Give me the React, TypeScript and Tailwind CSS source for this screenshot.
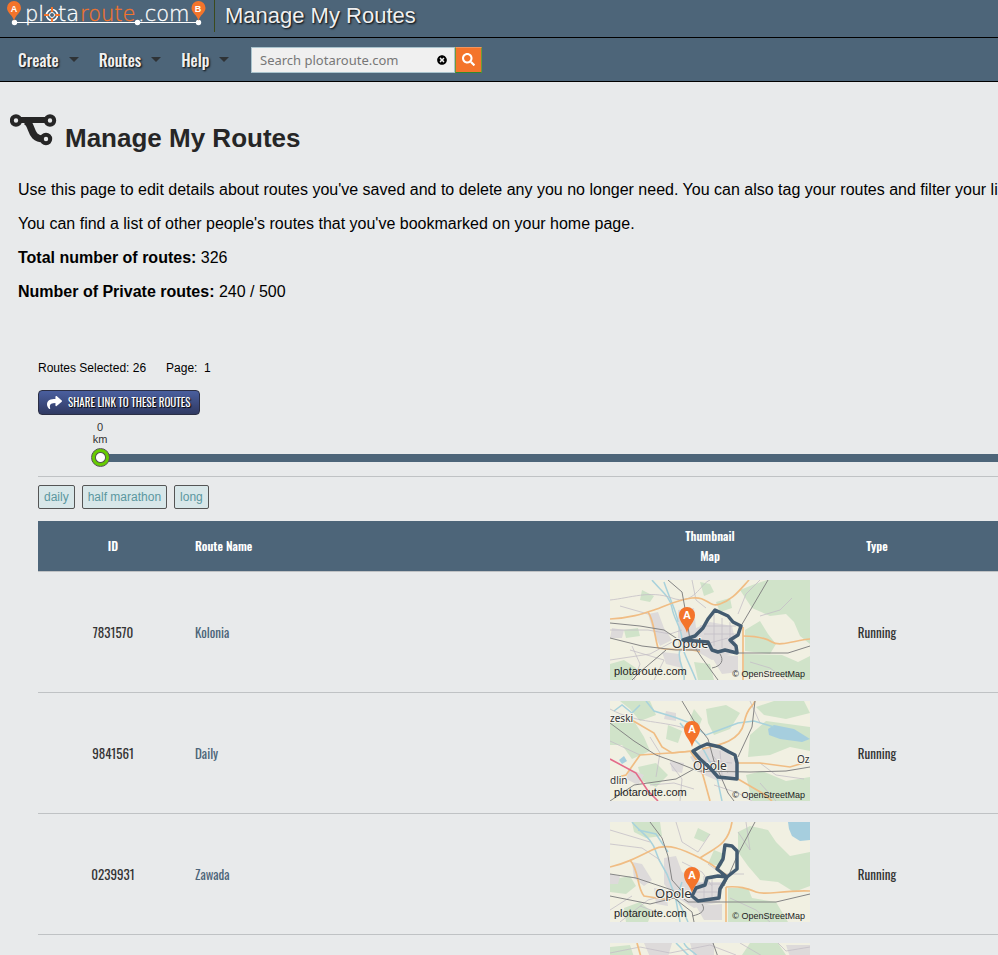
import type { ReactNode } from "react";
import { FaSearch, FaShare, FaTimesCircle } from "react-icons/fa";

const sans = "font-['Liberation_Sans',Arial,sans-serif]";
const narrow =
  "font-['Oswald','Roboto_Condensed','Liberation_Sans_Narrow','Liberation_Sans',sans-serif]";

function Pin({ x, y, label }: { x: number; y: number; label: string }) {
  return (
    <g transform={`translate(${x} ${y})`}>
      <path
        d="M0 0C-1.5-7-8-11-8-18A8 8 0 0 1 8-18C8-11 1.5-7 0 0Z"
        fill="#f4742b"
      />
      <text
        y="-14"
        textAnchor="middle"
        fill="#fff"
        fontSize="11"
        fontWeight="700"
        className={sans}
      >
        {label}
      </text>
    </g>
  );
}

function Logo() {
  return (
    <svg
      width="200"
      height="28"
      viewBox="0 0 200 28"
      className="block shrink-0 overflow-visible"
      role="img"
      aria-label="plotaroute.com"
    >
      <g
        className="font-['DejaVu_Sans_Light','DejaVu_Sans','Lato',sans-serif]"
        fontSize="21"
        fontWeight="200"
        fill="#fff"
      >
        <text x="17" y="21" stroke="#fff" strokeWidth="0.3">pl</text>
        <text x="50" y="21" stroke="#fff" strokeWidth="0.3">ta</text>
        <text x="72" y="21" fill="#f4742b" stroke="#f4742b" strokeWidth="0.3">
          route
        </text>
        <text x="130" y="21" stroke="#fff" strokeWidth="0.3">.com</text>
      </g>
      <g fill="none">
        <circle cx="44" cy="15" r="5.5" stroke="#fff" strokeWidth="1.6" />
        <circle cx="44" cy="15" r="2.5" stroke="#fff" strokeWidth="1" />
        <path
          d="M44 7v5M44 18v5M36 15h5M47 15h5"
          stroke="#f4742b"
          strokeWidth="2"
        />
      </g>
      <path d="M6 22.5H191" stroke="#fff" />
      <g fill="#fff">
        <circle cx="6.5" cy="22.5" r="2.7" />
        <circle cx="129.5" cy="22.5" r="2.7" />
        <circle cx="190.5" cy="22.5" r="2.7" />
      </g>
      <g fill="#f4742b">
        <path d="M6 21C5 15-1 13-1 8A7 7 0 0 1 13 8C13 13 7 15 6 21Z" />
        <path d="M190.5 21C189.5 15 183.5 13 183.5 8A7 7 0 0 1 197.5 8C197.5 13 191.5 15 190.5 21Z" />
      </g>
      <g
        className={sans}
        fill="#fff"
        fontSize="9"
        fontWeight="700"
        textAnchor="middle"
      >
        <text x="6" y="12">A</text>
        <text x="190" y="12">B</text>
      </g>
    </svg>
  );
}

function RoutesIcon() {
  return (
    <svg
      width="47"
      height="34"
      viewBox="0 0 47 34"
      className="block shrink-0"
      aria-hidden="true"
    >
      <g fill="none" stroke="#262626">
        <path d="M10 6H37" strokeWidth="6" />
        <path d="M15 7C24 9 18 26 35 25" strokeWidth="7" />
        <circle cx="6" cy="6.5" r="4.2" strokeWidth="4" fill="#e8eaeb" />
        <circle cx="40" cy="6.5" r="4.2" strokeWidth="4" fill="#e8eaeb" />
        <circle cx="36" cy="25" r="4.2" strokeWidth="4" fill="#e8eaeb" />
      </g>
    </svg>
  );
}

type Place = { x: number; y: number; size: number; name: string };

type MapData = {
  forest: string[];
  town: string[];
  water: string[];
  river: string[];
  lanes: string[];
  main: string[];
  rail: string[];
  motorway?: string;
  places: Place[];
  route?: string;
  pin?: [number, number];
};

const maps: Record<string, MapData> = {
  kolonia: {
    forest: [
      "M130 10L145 4L157 0H200V64L190 56L184 42L176 34L160 36L142 28Z",
      "M135 50L150 41L158 54L166 64L160 74L135 71Z",
      "M134 74L172 75L188 82L200 76V100H182L160 90L134 96Z",
      "M0 84L14 80L26 88L22 100H0Z",
      "M90 2L100 4L104 12L94 16ZM106 22L120 18L122 28L110 32Z",
      "M14 50L28 48L30 56L16 58ZM32 10L44 16L40 22L30 20Z",
      "M84 82L100 84L104 100H88Z",
    ],
    town: [
      "M68 30L84 28L86 48L100 42L122 46L128 72L102 80L84 70L68 66Z",
      "M38 34L48 32L54 48L62 60L50 66L44 54Z",
      "M52 72L70 74L72 88L56 84ZM2 48L14 50L12 58L0 58ZM100 74L128 76V92L112 94Z",
    ],
    water: [],
    river: [
      "M42 0C50 10 60 16 62 28S72 48 72 60S78 80 86 100",
      "M54 2C60 20 66 30 68 42M70 70C66 80 76 90 74 100",
    ],
    lanes: [
      "M0 20C20 18 40 10 62 18S90 4 100 0",
      "M0 50H38L60 54L72 50M10 26L38 34M20 70L54 80L44 100",
      "M90 46H126M94 54H128M104 34V66M112 38V68M120 42V64",
      "M82 0L86 20L96 28M0 80L40 74L66 60M96 64L118 58M140 82L160 88L176 100",
      "M150 36L170 30L182 18M22 66L30 84L24 100M150 0L136 14L128 34",
    ],
    main: [
      "M0 39C20 38 32 34 44 30S66 20 82 18S98 28 110 24S128 12 139 0",
      "M38 32C44 40 44 54 48 68",
      "M133 47V100",
      "M133 56C144 56 154 57 162 62S186 60 200 59",
      "M48 68C64 72 74 66 90 72",
    ],
    rail: [
      "M58 0L72 12L76 34L80 60L92 78L108 100",
      "M0 43L30 46L54 50L72 62",
      "M0 58L32 66L66 70L90 70",
      "M158 0L131 46",
      "M124 73H178L200 66",
      "M102 88C112 86 114 80 110 74M56 70L30 92L22 100",
    ],
    places: [{ x: 62, y: 68, size: 13, name: "Opole" }],
    route:
      "M73 60L85 56L93 48L98 39L105 30L118 36L123 42L131 46L128 55L120 60L126 66L127 73L115 70L108 72L102 70L98 62Z",
    pin: [77, 53],
  },
  daily: {
    forest: [
      "M0 20L10 14L24 20L34 36L40 50L22 58L12 44L0 44Z",
      "M10 0L40 0L46 14L30 20L20 8Z",
      "M96 8L116 4L130 12L120 28L104 34L98 22Z",
      "M140 34L156 20L200 26V50L180 46L160 54L138 56Z",
      "M146 6L164 0H194L200 12L176 18L154 14Z",
      "M136 74L152 70L176 80L200 76V100H142Z",
      "M28 66L46 62L58 74L46 86L32 80ZM84 8L92 18L88 28L80 18Z",
      "M58 24L72 30L68 42L56 38Z",
    ],
    town: [
      "M80 56L96 46L116 50L126 60V78L108 80L90 72Z",
      "M20 68L34 74L28 84L16 78ZM60 60L74 62L72 72L62 70Z",
      "M56 10L66 12L66 20L54 18Z",
    ],
    water: ["M158 28L164 24L184 28L200 38L192 41L170 38L159 34Z", "M9 59L14 55L17 60L12 63Z"],
    river: [
      "M36 0L44 10L64 16L80 22L96 34L112 28L128 22L144 20L164 26",
      "M70 22L80 34L92 46L106 72L112 100M4 10L12 4L22 12L30 4",
    ],
    lanes: [
      "M0 8C30 24 50 18 84 30M40 36L50 52L46 76M0 40L30 54",
      "M60 62L72 78L70 100M104 84L128 92L142 100M140 0L150 22",
      "M98 60L122 62M102 54L118 72M110 50L112 74",
      "M40 84L64 82L84 88M150 62L166 74L194 78M166 100L150 82",
    ],
    main: [
      "M20 18L44 32L52 46L62 52L82 50",
      "M0 78L16 74L30 54L60 52L84 50",
      "M80 50L90 64L94 78L100 100",
      "M92 48C110 44 130 40 134 22S142 8 145 0",
      "M128 62L150 62L180 66L200 60",
      "M128 78L152 92L162 100",
    ],
    rail: [
      "M72 0L84 20L98 38L104 60L118 92L124 100",
      "M0 22L24 40L46 54L68 62L88 70L140 71L176 70L200 66",
      "M145 0L142 26L128 56",
      "M84 68L66 78L24 84L0 100",
    ],
    motorway: "M0 58L26 72L38 90L48 100",
    places: [
      { x: 0, y: 21, size: 10, name: "zeski" },
      { x: 187, y: 62, size: 10, name: "Oz" },
      { x: 0, y: 83, size: 10, name: "dlin" },
      { x: 83, y: 69, size: 12, name: "Opole" },
    ],
    route:
      "M83 50L90 46L97 43L110 46L119 51L125 54L127 62V78L108 76L100 67L90 58Z",
    pin: [82, 46],
  },
  zawada: {
    forest: [
      "M128 10L140 4L158 8L166 20L180 34L200 30V64L184 70L168 60L150 58L138 44L128 30Z",
      "M104 28L114 32L112 44L98 42ZM118 66L138 66L142 76L166 80L178 100H118Z",
      "M0 58L20 54L26 64L16 72L0 70Z",
      "M22 0L50 0L52 14L36 16L24 10ZM88 6L100 12L94 20L84 16Z",
      "M14 86L30 80L42 90L38 100H16Z",
    ],
    town: [
      "M54 36L66 34L72 50L90 60L112 60L110 80L84 86L64 74L54 62Z",
      "M22 40L32 42L42 58L34 64L24 56ZM86 84L112 82V98H94Z",
      "M0 52L10 54L8 62L0 62ZM44 66L56 68L58 84L46 82Z",
    ],
    water: ["M178 0H200V18L190 19L182 14L179 7Z"],
    river: [
      "M22 0C30 10 42 16 46 30S56 46 60 60S70 80 78 100",
      "M28 8L46 12L58 30M72 60L66 78L70 100",
    ],
    lanes: [
      "M0 22L32 26L50 38M0 8L40 20M66 0L72 20L88 30L100 12",
      "M82 62H114M86 70H110M94 54V80M102 56V78",
      "M10 100L38 78L60 72M30 84L52 92M120 76L146 88L160 100",
      "M98 42L112 52L134 52M128 10L140 28L136 0",
      "M0 88L22 74M72 40L92 50L102 64",
    ],
    main: [
      "M0 45C14 42 26 36 42 28S74 28 90 36S106 46 118 54",
      "M20 38C30 50 26 64 34 74L60 78",
      "M90 36C104 26 118 24 122 0",
      "M116 65V100",
      "M116 65C130 64 136 66 146 70S170 68 200 69",
    ],
    rail: [
      "M40 0L52 16L58 34L62 58L78 76",
      "M0 52L26 56L62 68L78 80H166L200 72",
      "M145 0L128 32L114 64",
      "M0 74L40 82L64 76L82 90L84 100",
      "M82 94C92 92 96 88 92 82",
    ],
    places: [{ x: 45, y: 76, size: 13, name: "Opole" }],
    route:
      "M115 23L122 24L127 29V47L117 55L107 47L113 37ZM117 55L108 54L97 56L95 63L86 66L82 74L88 79L109 76L110 67Z",
    pin: [82, 71],
  },
  next: {
    forest: ["M140 0H168L176 12H132Z", "M0 4L20 2L24 14H0Z"],
    town: ["M34 0H62L58 14H40ZM80 0H104V14H84ZM176 2H200V14H180Z"],
    water: [],
    river: ["M74 0C76 6 84 8 88 14M66 0L80 14"],
    lanes: ["M0 10L30 4L60 10L100 2L126 12M130 0L154 14M168 0L176 8L200 4"],
    main: ["M27 0L31 14"],
    rail: ["M103 0L108 14"],
    places: [],
  },
};

function Thumb({ data, title }: { data: MapData; title: string }) {
  const draw = (paths: string[], stroke: string, width: number): ReactNode =>
    paths.map((d) => (
      <path key={d} d={d} fill="none" stroke={stroke} strokeWidth={width} />
    ));
  const fill = (paths: string[], colour: string): ReactNode =>
    paths.map((d) => <path key={d} d={d} fill={colour} />);
  return (
    <svg
      width="200"
      height="100"
      viewBox="0 0 200 100"
      className="mx-auto block overflow-hidden"
      role="img"
      aria-label={title}
    >
      <rect width="200" height="100" fill="#f1f0e2" />
      {fill(data.forest, "#d0e3c9")}
      {fill(data.town, "#dddada")}
      {fill(data.water, "#a6cede")}
      {draw(data.river, "#a8d2dc", 1.5)}
      {draw(data.lanes, "#c4bfc6", 0.8)}
      {draw(data.main, "#f0bd84", 1.7)}
      {draw(data.rail, "#858585", 1)}
      {data.motorway && draw([data.motorway], "#e46a89", 1.6)}
      {data.places.map((p) => (
        <text
          key={p.name}
          x={p.x}
          y={p.y}
          fontSize={p.size}
          fill="#333"
          stroke="#f6f5ee"
          strokeWidth="2"
          paintOrder="stroke"
          className="font-['Noto_Sans',sans-serif]"
        >
          {p.name}
        </text>
      ))}
      {data.route && (
        <path
          d={data.route}
          fill="none"
          stroke="#435b70"
          strokeWidth="3.5"
          strokeLinejoin="round"
        />
      )}
      {data.pin && <Pin x={data.pin[0]} y={data.pin[1]} label="A" />}
      {data.pin && (
        <g className={sans} fill="#222">
          <text x="4" y="95" fontSize="11">
            plotaroute.com
          </text>
          <text x="195" y="97" fontSize="9" textAnchor="end">
            © OpenStreetMap
          </text>
        </g>
      )}
    </svg>
  );
}

const routes = [
  { id: "7831570", name: "Kolonia", type: "Running", map: maps.kolonia },
  { id: "9841561", name: "Daily", type: "Running", map: maps.daily },
  { id: "0239931", name: "Zawada", type: "Running", map: maps.zawada },
  { id: "", name: "", type: "", map: maps.next },
];

const tags = ["daily", "half marathon", "long"];

function Header() {
  return (
    <header className="bg-[#4d6579]">
      <div className="flex h-[38px] items-start border-b border-black pl-2">
        <Logo />
        <div className="ml-1.5 h-8 border-l border-[#3b4a1c]" />
        <div className="ml-2.5 pt-0.5 text-[22px] leading-7 text-[#f0f0f0] [text-shadow:1px_1px_2px_#000]">
          Manage My Routes
        </div>
      </div>
      <div className="flex h-11 items-center border-b border-black pl-[18px]">
        <nav className={`flex w-[233px] gap-5 ${narrow}`}>
          {["Create", "Routes", "Help"].map((item) => (
            <button
              key={item}
              type="button"
              className="flex items-center gap-2.5 text-base leading-6 font-medium text-[#f0f0f0] [text-shadow:1px_1px_2px_#000]"
            >
              {item}
              <svg width="10" height="5" viewBox="0 0 10 5" aria-hidden="true">
                <path d="M0 0H10L5 5Z" fill="#2f3336" />
              </svg>
            </button>
          ))}
        </nav>
        <form className="flex h-[26px]" role="search">
          <div className="flex w-[204px] items-center border border-[#a9c3cd] bg-[#f0f0f0] pr-[7px] pl-2">
            <input
              aria-label="Search plotaroute.com"
              placeholder="Search plotaroute.com"
              className="min-w-0 flex-1 bg-transparent font-['Noto_Sans',sans-serif] text-[13px] leading-5 placeholder:text-[#777]"
            />
            <button type="button" aria-label="Clear search">
              <FaTimesCircle className="block size-2.5 text-black" />
            </button>
          </div>
          <button
            type="submit"
            aria-label="Search"
            className="flex w-[27px] items-center justify-center border border-t-[#f4955c] border-r-[#6f9a36] border-b-[#2f8a2f] border-l-[#6f9a36] bg-[#f4742b] text-white"
          >
            <FaSearch className="size-[13px]" />
          </button>
        </form>
      </div>
    </header>
  );
}

export default function App() {
  return (
    <div
      className={`h-screen overflow-hidden bg-[#e8eaeb] text-black ${sans}`}
    >
      <Header />
      <main>
        <div className="flex h-[90px] items-start pt-8 pl-2.5">
          <RoutesIcon />
          <h1 className="mt-1.5 ml-2 text-[26px] leading-9 font-bold text-[#262626]">
            Manage My Routes
          </h1>
        </div>
        <div className="space-y-2.5 pt-1.5 pl-[18px] text-base leading-6 whitespace-nowrap">
          <p>
            Use this page to edit details about routes you've saved and to
            delete any you no longer need. You can also tag your routes and
            filter your list
          </p>
          <p>
            You can find a list of other people's routes that you've bookmarked
            on your home page.
          </p>
          <p>
            <strong>Total number of routes:</strong> 326
          </p>
          <p>
            <strong>Number of Private routes:</strong> 240 / 500
          </p>
        </div>
        <section className="pt-14 pl-[38px]">
          <div className="flex gap-5 text-xs leading-4">
            <span>Routes Selected: 26</span>
            <span>Page: &nbsp;1</span>
          </div>
          <button
            type="button"
            className={`mt-3.5 flex h-[25px] items-center gap-1.5 rounded border border-[#2b2f45] bg-linear-to-b from-[#4a5f9f] to-[#303a63] px-2 text-[11px] text-white [text-shadow:1px_1px_1px_#000] ${narrow}`}
          >
            <FaShare className="size-[15px]" />
            SHARE LINK TO THESE ROUTES
          </button>
          <div className="h-[62px] border-b border-[#bfc2c4] pt-1.5 pl-[53px]">
            <label
              htmlFor="distance"
              className="block w-[18px] text-center text-[11px] leading-3 text-[#333]"
            >
              0 km
            </label>
            <input
              id="distance"
              type="range"
              min={0}
              max={100}
              defaultValue={0}
              className="mt-[3px] block h-5 w-full appearance-none bg-transparent [&::-webkit-slider-runnable-track]:h-2 [&::-webkit-slider-runnable-track]:bg-[linear-gradient(90deg,transparent_10px,#4d6579_10px)] [&::-webkit-slider-thumb]:-mt-1.5 [&::-webkit-slider-thumb]:size-[19px] [&::-webkit-slider-thumb]:appearance-none [&::-webkit-slider-thumb]:rounded-full [&::-webkit-slider-thumb]:border [&::-webkit-slider-thumb]:border-[#555] [&::-webkit-slider-thumb]:bg-[radial-gradient(circle,#fff_4px,#555_5px,#6c0_6px)]"
            />
          </div>
          <div className="flex gap-[7px] py-2 text-xs leading-[22px]">
            {tags.map((tag) => (
              <button
                key={tag}
                type="button"
                className="rounded-xs border border-[#555] bg-[#d8e7e9] px-[5px] text-[#5b979f]"
              >
                {tag}
              </button>
            ))}
          </div>
          <table
            className={`mt-1 w-full table-fixed border-collapse text-center text-[13px] leading-5 text-[#333] ${narrow}`}
          >
            <thead className="bg-[#4d6579] text-xs leading-5 text-white">
              <tr className="h-[50px] border-b border-[#bfc2c4]">
                <th className="w-[150px] font-semibold">ID</th>
                <th className="pl-[7px] text-left font-semibold">Route Name</th>
                <th className="w-[214px] font-semibold">
                  Thumbnail
                  <br />
                  Map
                </th>
                <th className="w-[120px] font-semibold">Type</th>
                <td className="w-[61px]" />
              </tr>
            </thead>
            <tbody>
              {routes.map((route) => (
                <tr key={route.id} className="border-b border-[#bfc2c4]">
                  <td>{route.id}</td>
                  <td className="pl-[7px] text-left">
                    {route.name && (
                      <a href="#route" className="text-[#4d6579]">
                        {route.name}
                      </a>
                    )}
                  </td>
                  <td className="pt-2 pb-3">
                    <Thumb data={route.map} title={`${route.name} route map`} />
                  </td>
                  <td>{route.type}</td>
                  <td />
                </tr>
              ))}
            </tbody>
          </table>
        </section>
      </main>
    </div>
  );
}
